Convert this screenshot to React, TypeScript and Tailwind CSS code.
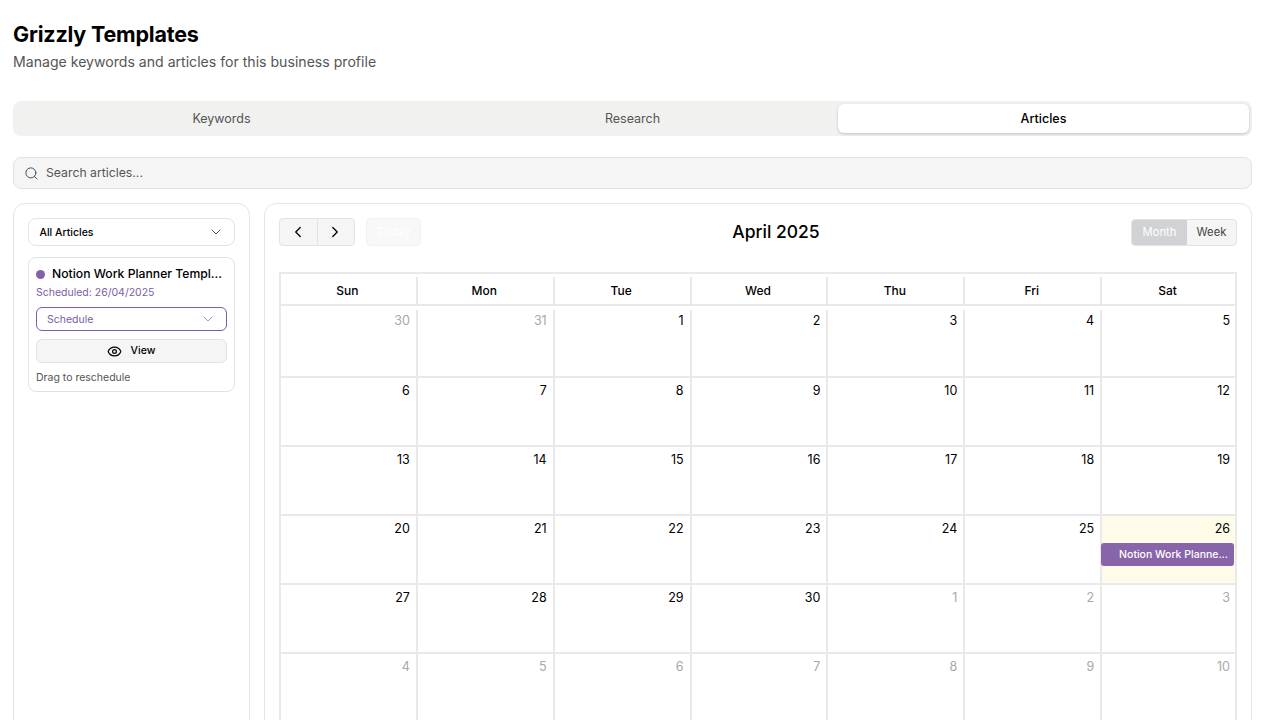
import { ChevronDown, ChevronLeft, ChevronRight, Eye, Search } from "lucide-react";

const font = { fontFamily: "Inter, sans-serif" };
const heads = ["Sun", "Mon", "Tue", "Wed", "Thu", "Fri", "Sat"];
const rows: [string, boolean][][] = [
  [["30", true], ["31", true], ["1", false], ["2", false], ["3", false], ["4", false], ["5", false]],
  [["6", false], ["7", false], ["8", false], ["9", false], ["10", false], ["11", false], ["12", false]],
  [["13", false], ["14", false], ["15", false], ["16", false], ["17", false], ["18", false], ["19", false]],
  [["20", false], ["21", false], ["22", false], ["23", false], ["24", false], ["25", false], ["26", false]],
  [["27", false], ["28", false], ["29", false], ["30", false], ["1", true], ["2", true], ["3", true]],
  [["4", true], ["5", true], ["6", true], ["7", true], ["8", true], ["9", true], ["10", true]],
];

export default function App() {
  return (
    <div className="h-[720px] overflow-hidden bg-white pl-[13px] pr-[28px] pt-[21px] text-black antialiased" style={font}>
      <h1 className="text-[21.5px] leading-[26px] font-bold tracking-[-0.2px]">Grizzly Templates</h1>
      <p className="mt-[5px] text-[14.1px] leading-[20px] text-[#555]">Manage keywords and articles for this business profile</p>

      <div className="mt-[29px] grid h-[35px] grid-cols-3 rounded-lg bg-[#f1f1f0] p-[3px] text-[12.5px]">
        <div className="flex items-center justify-center pt-px font-normal text-[#555]">Keywords</div>
        <div className="flex items-center justify-center pt-px font-normal text-[#555]">Research</div>
        <div className="flex items-center justify-center rounded-md bg-white pt-px font-medium shadow-[0_1px_3px_rgba(0,0,0,0.2)]">Articles</div>
      </div>

      <div className="mt-[21px] flex h-[32px] items-center gap-[7px] rounded-lg border border-[#e3e3e3] bg-[#f5f5f5] pl-[10px] text-[12.25px] text-[#555]">
        <Search size={15} strokeWidth={1.5} className="text-[#444]" />
        <span className="pt-px">Search articles...</span>
      </div>

      <div className="mt-[14px] flex gap-[14px]">
        <aside className="h-[600px] w-[237px] shrink-0 rounded-xl border border-[#e5e5e5] p-[14px]">
          <div className="flex h-[28px] items-center justify-between rounded-lg border border-[#e2e2e2] pl-[10.5px] pr-[10px] text-[10.5px] font-medium">
            <span className="pt-px">All Articles</span>
            <ChevronDown size={16} strokeWidth={1.5} className="text-[#555]" />
          </div>
          <div className="mt-[11px] h-[135px] rounded-lg border border-[#e2e2e2] px-[7px] pt-[8px]">
            <div className="flex items-center gap-[6px]">
              <span className="h-[9px] w-[9px] shrink-0 rounded-full bg-[#8560a8]" />
              <span className="ml-px truncate text-[12.2px] leading-[16px] font-medium">Notion Work Planner Templ...</span>
            </div>
            <p className="mt-[4px] text-[10.5px] leading-[14px] text-[#7b5ea7]">Scheduled: 26/04/2025</p>
            <div className="mt-[7px] flex h-[24px] items-center justify-between rounded-md border border-[#7b5ea7] pl-[10px] pr-[10px] text-[10.5px] text-[#7b5ea7]">
              <span className="pt-px">Schedule</span>
              <ChevronDown size={16} strokeWidth={1.5} className="text-[#a793c4]" />
            </div>
            <div className="mt-[8px] flex h-[24px] items-center justify-center gap-[9px] rounded-md border border-[#e3e3e3] bg-[#f5f5f5] text-[10.5px] font-medium">
              <Eye size={15} strokeWidth={2} className="-ml-px" />
              View
            </div>
            <p className="mt-[8px] text-[10.5px] leading-[14px] text-[#555]">Drag to reschedule</p>
          </div>
        </aside>

        <main className="h-[600px] min-w-0 flex-1 rounded-xl border border-[#e5e5e5] px-[14px] pt-[14px]">
          <div className="flex h-[28px] items-center">
            <div className="flex h-[28px] w-[76px] rounded-[4px] border border-[#e3e3e3] bg-[#f5f5f5]">
              <div className="flex flex-1 items-center justify-center border-r border-[#e3e3e3]"><ChevronLeft size={18} strokeWidth={1.75} /></div>
              <div className="flex flex-1 items-center justify-center"><ChevronRight size={18} strokeWidth={1.75} className="-ml-px" /></div>
            </div>
            <div className="ml-[11px] flex h-[28px] w-[55px] items-center justify-center rounded-[4px] border border-[#f1f1f1] bg-[#f8f8f8] text-[12px] text-white">Today</div>
            <h2 className="flex-1 pt-px text-center text-[17.5px] font-medium">April 2025</h2>
            <div className="flex h-[27px] w-[106px] overflow-hidden rounded-[4px] border border-[#e3e3e3] bg-[#f5f5f5] text-[11.25px]">
              <div className="flex w-[55px] items-center justify-center bg-[#d1d2d6] text-white">Month</div>
              <div className="flex flex-1 items-center justify-center text-[#444]">Week</div>
            </div>
          </div>

          <div className="mt-[26px]">
            <div className="grid h-[34px] grid-cols-7 border-y-2 border-[#e9e9e9] text-[12px] font-medium">
              {heads.map((h, i) => (
                <div key={h} className="flex min-w-0">
                  <span className={`w-[2px] shrink-0 bg-[#e9e9e9] ${i === 0 ? "" : "mt-[3px]"}`} />
                  <span className="flex flex-1 items-center justify-center pr-[2px] pt-[3px]">{h}</span>
                  {i === 6 && <span className="w-[2px] shrink-0 bg-[#e9e9e9]" />}
                </div>
              ))}
            </div>
            {rows.map((row, r) => (
              <div key={r} className={`grid grid-cols-7 border-b-2 border-[#e9e9e9] ${r === 0 ? "h-[72px]" : "h-[69px]"}`}>
                {row.map(([d, muted], c) => {
                  const today = r === 3 && c === 6;
                  return (
                    <div key={c} className={`flex min-w-0 ${today ? "bg-[#fefbe8]" : ""}`}>
                      <span className={`w-[2px] shrink-0 bg-[#e9e9e9] ${r === 0 && c > 0 ? "mt-[4px]" : ""}`} />
                      <div className={`min-w-0 flex-1 ${r === 0 ? "pt-[6px]" : "pt-[4px]"}`}>
                        <div className={`pr-[6px] text-right text-[12.5px] leading-[18px] ${c === 6 ? "-mr-[2px]" : ""} ${muted ? "text-[#a8a8a8]" : "text-black"}`}>{d}</div>
                        {today && (
                          <div className="-ml-px mt-[5px] flex h-[23px] items-center justify-end rounded-[3px] bg-[#8864aa] pr-[6px] text-[10.5px] font-medium text-white">
                            Notion Work Planne...
                          </div>
                        )}
                      </div>
                      {c === 6 && <span className="ml-px w-[2px] shrink-0 bg-[#e9e9e9]" />}
                    </div>
                  );
                })}
              </div>
            ))}
          </div>
        </main>
      </div>
    </div>
  );
}
